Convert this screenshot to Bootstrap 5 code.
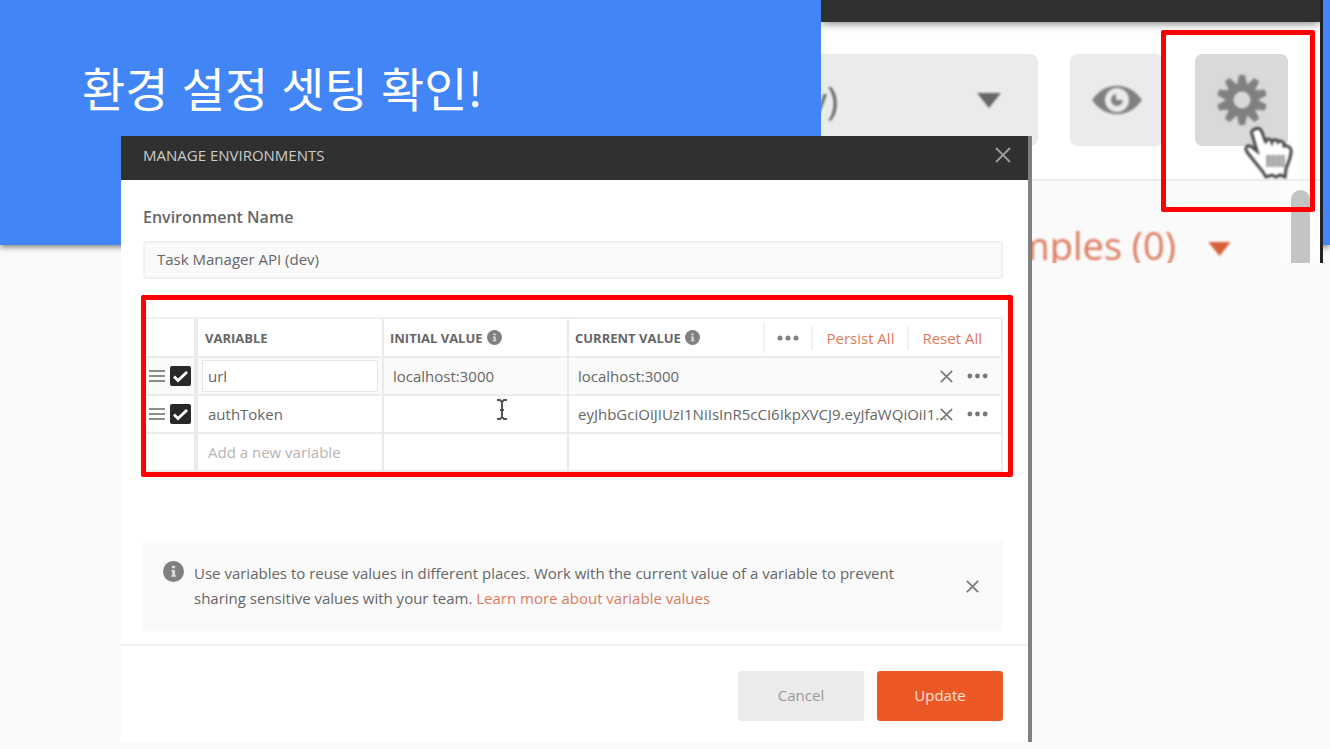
<!DOCTYPE html>
<html lang="ko">
<head>
<meta charset="utf-8">
<meta name="viewport" content="width=device-width, initial-scale=1">
<title>환경 설정 셋팅 확인!</title>
<link href="https://cdn.jsdelivr.net/npm/bootstrap@5.3.0/dist/css/bootstrap.min.css" rel="stylesheet">
<style>
  body { background: #fafafa; color: #666; font: 15px/24px "Open Sans", "Noto Sans CJK KR", sans-serif; }
  svg { display: block; flex: none; }
  .plain { appearance: none; border: 0; background: none; padding: 0; color: inherit; }

  /* slide heading */
  .slide { overflow-x: hidden; min-height: 100vh; }
  .banner { height: 245px; background: #4285f7; box-shadow: 0 2px 6px rgba(0,0,0,.5); padding: 51px 82px; }
  .banner h1 { font: 400 47px/72px "Noto Sans CJK KR", sans-serif; color: #fff; margin: 0; }

  /* enlarged toolbar corner */
  .corner { top: 0; right: 7px; width: 502px; height: 263px; background: #fff; border-right: 3px solid #222; overflow: hidden; }
  .corner-bar { height: 22px; background: #303030; box-shadow: 0 1px 10px rgba(0,0,0,.55); }
  .corner-tools { height: 157px; padding: 32px 32px 0 0; gap: 32px; }
  .tool { width: 93px; height: 92px; border-radius: 7px; background: #ebebeb; color: #808080; }
  .tool-picked { background: #d9d9d9; }
  .tool-env { flex: 1; border-radius: 0 7px 7px 0; font-size: 38px; line-height: 48px; color: #666; padding-right: 37px; }
  .tool-env span { margin-left: -13px; }
  .corner-foot { height: 84px; background: #fafafa; border-top: 2px solid #eee; padding: 37px 89px 0 0; gap: 32px; color: #dd7a5c; font-size: 38px; line-height: 54px; }
  .corner-foot a { color: inherit; text-decoration: none; }
  .track { right: 0; bottom: 0; width: 39px; height: 82px; background: #fdfdfd; }
  .thumb { right: 10px; bottom: 0; width: 19px; height: 73px; background: #c4c4c4; border-radius: 10px 10px 0 0; }
  .soft { filter: blur(1px); }
  .mark-gear { top: 30px; right: 15px; width: 154px; height: 182px; border: 5px solid #f00; border-radius: 2px; }
  .hand { top: 125px; right: 34px; }

  /* dialog */
  .dialog { margin: -109px 298px 7px 121px; background: #fff; border-right: 4px solid #808080; z-index: 2; }
  .dialog-top { height: 44px; background: #303030; color: #ccc; padding: 0 16px 6px 22px; }
  .dialog-top h2 { font-size: 15px; line-height: 24px; margin: 0; }
  .dialog-main { padding: 25px 25px 13px 22px; }
  .dialog-main .env-label { font-size: 16px; font-weight: 600; margin-bottom: 12px; display: block; }
  .env-name { height: 38px; border: 2px solid #f0f0f0; border-radius: 3px; background: #fafafa; color: #666; font-size: 15px; padding: 0 12px 2px; }
  .frame { border: 5px solid #f00; border-radius: 2px; margin: 16px -10px 0 -2px; padding: 17px 5px 0 0; }

  .vars { width: 100%; table-layout: fixed; border-collapse: separate; border-spacing: 0; border-top: 2px solid #f0f0f0; }
  .vars th, .vars td { height: 38px; padding: 0 0 0 7px; border: solid #ebebeb; border-width: 0 2px 2px 0; vertical-align: middle; }
  .vars th { height: 39px; font-size: 13px; font-weight: 700; padding-left: 6px; }
  .vars th:nth-child(2) { padding-left: 7px; }
  .vars th:first-child, .vars td:first-child { border-right-width: 4px; padding: 0 0 0 3px; }
  .vars .c-tick { width: 52px; }
  .vars .c-name { width: 186px; }
  .vars .c-init { width: 185px; }
  .vars .picked td { background: #fafafa; }
  .vars input[type=text] { width: 100%; height: 32px; border: 0; background: none; color: #666; padding: 0 2px; font-size: 15px; outline: 0; min-width: 0; }
  .vars input::placeholder { color: #b4b4b4; opacity: 1; }
  .vars .name-cell { padding: 0 4px; }
  .vars .name-cell input { padding: 0 5px; border: 1px solid transparent; }
  .vars .picked .name-cell input { background: #fff; border-color: #e6e6e6; }
  .vars .form-check-input { width: 21px; height: 20px; margin: 0; border: 0; border-radius: 2px; }
  .vars .form-check-input:checked { background: #282828 url("data:image/svg+xml,%3Csvg xmlns='http://www.w3.org/2000/svg' viewBox='0 0 21 20'%3E%3Cpath d='M4 10.500l4 4 9-8.500' fill='none' stroke='%23fff' stroke-width='2.800'/%3E%3C/svg%3E") center / 100% 100% no-repeat; }
  .tick-pair { padding-right: 3px; }
  .vars .row-end { padding-right: 13px; gap: 14px; color: #777; }
  .vars .row-end input { margin-right: -28px; }
  .head-tools { font-size: 15px; font-weight: 400; padding-right: 19px; color: #808080; }
  .head-tools .plain { color: #dd7a5c; padding: 0 13px; line-height: 24px; border-left: 2px solid #f0f0f0; white-space: nowrap; }
  .head-tools .plain:last-child { padding-right: 0; }
  .head-tools .more { height: 30px; color: #808080; padding: 0 12px; }
  .beam { top: 50%; right: 60px; margin-top: -15px; }

  .tip { margin-top: 64px; background: #fafafa; padding: 20px 24px 20px 20px; gap: 10px; line-height: 25px; }
  .tip p { margin: 0 26px 0 0; }
  .tip a { color: #dd7a5c; text-decoration: none; }
  .dialog-foot { border-top: 2px solid #f0f0f0; padding: 25px 25px 21px; gap: 13px; }
  .dialog-foot .btn { width: 126px; height: 50px; border: 0; border-radius: 3px; font-size: 15px; padding: 0 0 2px; }
  .btn-quiet, .btn-quiet:hover { background: #ebebeb; color: #999; }
  .btn-go, .btn-go:hover { background: #eb5826; color: #fbe0d6; }
</style>
</head>
<body>
<svg width="0" height="0" class="position-absolute" aria-hidden="true">
  <symbol id="i-x" viewBox="0 0 16 16"><path d="M1 1l14 14M15 1L1 15" fill="none" stroke="currentColor" stroke-width="2"/></symbol>
  <symbol id="i-dots" viewBox="0 0 22 6"><g fill="currentColor"><circle cx="3" cy="3" r="2.500"/><circle cx="11" cy="3" r="2.500"/><circle cx="19" cy="3" r="2.500"/></g></symbol>
  <symbol id="i-info" viewBox="0 0 20 20"><circle cx="10" cy="10" r="10" fill="#808080"/><path d="M8.500 4.500h3v2.500h-3zM8 8.500h3.500v5h1V15H7.800v-1.500h1V10H8z" fill="#ddd"/></symbol>
  <symbol id="i-grip" viewBox="0 0 16 14"><path d="M0 2h16M0 7h16M0 12h16" stroke="#8c8c8c" stroke-width="2"/></symbol>
  <symbol id="i-down" viewBox="0 0 24 15"><path d="M0 0h24L12 15z" fill="currentColor"/></symbol>
</svg>

<main class="slide position-relative">
  <header class="banner"><h1>환경 설정 셋팅 확인!</h1></header>

  <section class="corner position-absolute" aria-label="Toolbar">
    <div class="corner-bar"></div>
    <div class="corner-tools d-flex">
      <button type="button" class="plain tool tool-env d-flex align-items-center justify-content-between"><span class="soft">v)</span><svg class="soft" width="24" height="15"><use href="#i-down"/></svg></button>
      <button type="button" class="plain tool d-flex align-items-center justify-content-center" aria-label="View environment">
        <svg class="soft" width="50" height="30" viewBox="0 0 50 30"><path d="M0 15C13-4 37-4 50 15 37 34 13 34 0 15z" fill="#808080"/><circle cx="25" cy="15" r="10" fill="none" stroke="#ebebeb" stroke-width="4"/><circle cx="25" cy="15" r="8.500" fill="#ebebeb"/><path d="M24 9v6h7a6 6 0 1 1-7-6z" fill="#808080"/></svg>
      </button>
      <button type="button" class="plain tool tool-picked d-flex align-items-center justify-content-center" aria-label="Manage environments">
        <svg class="soft" width="50" height="50" viewBox="-25 -25 50 50"><g fill="#808080"><path id="tooth" d="M-5-15l2-10h6l2 10v30l-2 10h-6l-2-10z"/><use href="#tooth" transform="rotate(36)"/><use href="#tooth" transform="rotate(72)"/><use href="#tooth" transform="rotate(108)"/><use href="#tooth" transform="rotate(144)"/><circle r="17"/></g><circle r="8.500" fill="#d9d9d9"/></svg>
      </button>
    </div>
    <div class="corner-foot d-flex align-items-start justify-content-end">
      <a href="#" class="soft">mples (0)</a>
      <svg class="soft mt-4" width="23" height="14" color="#d9603c"><use href="#i-down"/></svg>
    </div>
    <div class="track position-absolute"></div>
    <div class="thumb position-absolute"></div>
  </section>
  <svg class="hand position-absolute soft" width="52" height="56" viewBox="0 0 52 56"><path d="M11 4c3-2 6 0 7 3l4 11V15c2-2 5-1 6 2 1-3 5-3 6 0 2-2 5-1 6 2v2c4-1 8 2 7 7-1 8-4 12-5 16l-1 8-5-2-4 2-4-2-6 2-3-5C15 42 10 36 3 27c-3-5 1-8 5-5l5 4L8 9c-1-2 0-4 3-5z" fill="#fff" stroke="#484848" stroke-width="3"/><path d="M22 30h19v12H22z" fill="#aaa"/><path d="M27 30v12M32 30v12M37 30v12" stroke="#c4c4c4"/></svg>
  <div class="mark-gear position-absolute"></div>

  <section class="dialog position-relative" role="dialog" aria-labelledby="dlg-title">
    <div class="dialog-top d-flex align-items-center justify-content-between">
      <h2 id="dlg-title">MANAGE ENVIRONMENTS</h2>
      <button type="button" class="plain" aria-label="Close"><svg width="18" height="16" color="#999"><use href="#i-x"/></svg></button>
    </div>
    <div class="dialog-main">
      <label class="env-label" for="env-name">Environment Name</label>
      <input id="env-name" class="env-name form-control" type="text" value="Task Manager API (dev)">

      <div class="frame">
        <table class="vars">
          <colgroup><col class="c-tick"><col class="c-name"><col class="c-init"><col></colgroup>
          <thead>
            <tr>
              <th></th>
              <th>VARIABLE</th>
              <th><span class="d-flex align-items-center gap-1">INITIAL VALUE <svg width="15" height="15"><use href="#i-info"/></svg></span></th>
              <th><div class="d-flex align-items-center justify-content-between">
                <span class="d-flex align-items-center gap-1 text-nowrap">CURRENT VALUE <svg width="15" height="15"><use href="#i-info"/></svg></span>
                <span class="head-tools d-flex align-items-center">
                  <button type="button" class="plain more" aria-label="More"><svg width="22" height="6"><use href="#i-dots"/></svg></button>
                  <button type="button" class="plain">Persist All</button>
                  <button type="button" class="plain">Reset All</button>
                </span></div></th>
            </tr>
          </thead>
          <tbody>
            <tr class="picked">
              <td><div class="tick-pair d-flex align-items-center justify-content-between"><svg width="16" height="14"><use href="#i-grip"/></svg><input class="form-check-input" type="checkbox" checked aria-label="Use url"></div></td>
              <td class="name-cell"><input type="text" value="url" aria-label="Variable"></td>
              <td><input type="text" value="localhost:3000" aria-label="Initial value"></td>
              <td><div class="row-end d-flex align-items-center"><input type="text" value="localhost:3000" aria-label="Current value">
                <button type="button" class="plain" aria-label="Remove"><svg width="13" height="13"><use href="#i-x"/></svg></button>
                <button type="button" class="plain" aria-label="More"><svg width="21" height="6"><use href="#i-dots"/></svg></button></div></td>
            </tr>
            <tr>
              <td><div class="tick-pair d-flex align-items-center justify-content-between"><svg width="16" height="14"><use href="#i-grip"/></svg><input class="form-check-input" type="checkbox" checked aria-label="Use authToken"></div></td>
              <td class="name-cell"><input type="text" value="authToken" aria-label="Variable"></td>
              <td class="position-relative"><input type="text" aria-label="Initial value">
                <svg class="beam position-absolute" width="10" height="21" viewBox="0 0 10 21"><path d="M0 1h3l2 2 2-2h3M5 3v15M0 20h3l2-2 2 2h3M3 11h4" fill="none" stroke="#555" stroke-width="2"/></svg></td>
              <td><div class="row-end d-flex align-items-center"><input type="text" value="eyJhbGciOiJIUzI1NiIsInR5cCI6IkpXVCJ9.eyJfaWQiOiI1..." aria-label="Current value">
                <button type="button" class="plain" aria-label="Remove"><svg width="13" height="13"><use href="#i-x"/></svg></button>
                <button type="button" class="plain" aria-label="More"><svg width="21" height="6"><use href="#i-dots"/></svg></button></div></td>
            </tr>
            <tr>
              <td></td>
              <td class="name-cell"><input type="text" placeholder="Add a new variable" aria-label="New variable"></td>
              <td></td>
              <td></td>
            </tr>
          </tbody>
        </table>
      </div>

      <div class="tip d-flex">
        <svg width="21" height="21"><use href="#i-info"/></svg>
        <p class="flex-grow-1">Use variables to reuse values in different places. Work with the current value of a variable to prevent sharing sensitive values with your team. <a href="#">Learn more about variable values</a></p>
        <button type="button" class="plain" aria-label="Dismiss"><svg width="13" height="13" color="#777"><use href="#i-x"/></svg></button>
      </div>
    </div>
    <div class="dialog-foot d-flex justify-content-end">
      <button type="button" class="btn btn-quiet">Cancel</button>
      <button type="button" class="btn btn-go">Update</button>
    </div>
  </section>
</main>
<script src="https://cdn.jsdelivr.net/npm/bootstrap@5.3.0/dist/js/bootstrap.bundle.min.js"></script>
</body>
</html>
